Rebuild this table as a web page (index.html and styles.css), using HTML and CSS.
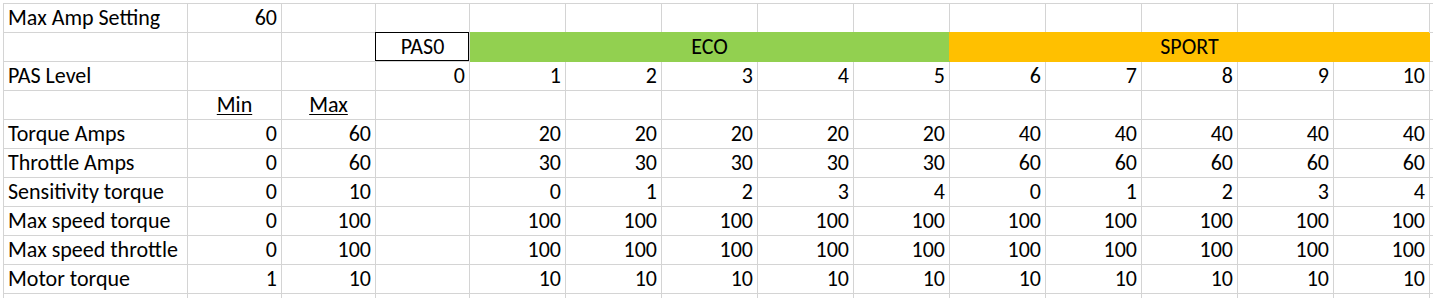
FILE: index.html
```html
<!DOCTYPE html>
<html>
<head>
<meta charset="utf-8">
<link rel="stylesheet" href="styles.css">
</head>
<body>
<div class="sheet">
  <div class="row">
    <div class="c">Max Amp Setting</div><div class="c n">60</div><div class="c"></div><div class="c"></div>
    <div class="c"></div><div class="c"></div><div class="c"></div><div class="c"></div><div class="c"></div>
    <div class="c"></div><div class="c"></div><div class="c"></div><div class="c"></div><div class="c"></div><div class="c x"></div>
  </div>
  <div class="row">
    <div class="c"></div><div class="c"></div><div class="c"></div><div class="c ctr boxed">PAS0</div>
    <div class="c ctr eco">ECO</div>
    <div class="c ctr sport">SPORT</div>
    <div class="c x"></div>
  </div>
  <div class="row">
    <div class="c">PAS Level</div><div class="c"></div><div class="c"></div><div class="c n">0</div>
    <div class="c n">1</div><div class="c n">2</div><div class="c n">3</div><div class="c n">4</div><div class="c n">5</div>
    <div class="c n">6</div><div class="c n">7</div><div class="c n">8</div><div class="c n">9</div><div class="c n">10</div><div class="c x"></div>
  </div>
  <div class="row">
    <div class="c"></div><div class="c ctr"><u>Min</u></div><div class="c ctr"><u>Max</u></div><div class="c"></div>
    <div class="c"></div><div class="c"></div><div class="c"></div><div class="c"></div><div class="c"></div>
    <div class="c"></div><div class="c"></div><div class="c"></div><div class="c"></div><div class="c"></div><div class="c x"></div>
  </div>
  <div class="row">
    <div class="c">Torque Amps</div><div class="c n">0</div><div class="c n">60</div><div class="c"></div>
    <div class="c n">20</div><div class="c n">20</div><div class="c n">20</div><div class="c n">20</div><div class="c n">20</div>
    <div class="c n">40</div><div class="c n">40</div><div class="c n">40</div><div class="c n">40</div><div class="c n">40</div><div class="c x"></div>
  </div>
  <div class="row">
    <div class="c">Throttle Amps</div><div class="c n">0</div><div class="c n">60</div><div class="c"></div>
    <div class="c n">30</div><div class="c n">30</div><div class="c n">30</div><div class="c n">30</div><div class="c n">30</div>
    <div class="c n">60</div><div class="c n">60</div><div class="c n">60</div><div class="c n">60</div><div class="c n">60</div><div class="c x"></div>
  </div>
  <div class="row">
    <div class="c">Sensitivity torque</div><div class="c n">0</div><div class="c n">10</div><div class="c"></div>
    <div class="c n">0</div><div class="c n">1</div><div class="c n">2</div><div class="c n">3</div><div class="c n">4</div>
    <div class="c n">0</div><div class="c n">1</div><div class="c n">2</div><div class="c n">3</div><div class="c n">4</div><div class="c x"></div>
  </div>
  <div class="row">
    <div class="c">Max speed torque</div><div class="c n">0</div><div class="c n">100</div><div class="c"></div>
    <div class="c n">100</div><div class="c n">100</div><div class="c n">100</div><div class="c n">100</div><div class="c n">100</div>
    <div class="c n">100</div><div class="c n">100</div><div class="c n">100</div><div class="c n">100</div><div class="c n">100</div><div class="c x"></div>
  </div>
  <div class="row">
    <div class="c">Max speed throttle</div><div class="c n">0</div><div class="c n">100</div><div class="c"></div>
    <div class="c n">100</div><div class="c n">100</div><div class="c n">100</div><div class="c n">100</div><div class="c n">100</div>
    <div class="c n">100</div><div class="c n">100</div><div class="c n">100</div><div class="c n">100</div><div class="c n">100</div><div class="c x"></div>
  </div>
  <div class="row">
    <div class="c">Motor torque</div><div class="c n">1</div><div class="c n">10</div><div class="c"></div>
    <div class="c n">10</div><div class="c n">10</div><div class="c n">10</div><div class="c n">10</div><div class="c n">10</div>
    <div class="c n">10</div><div class="c n">10</div><div class="c n">10</div><div class="c n">10</div><div class="c n">10</div><div class="c x"></div>
  </div>
  <div class="row last">
    <div class="c"></div><div class="c"></div><div class="c"></div><div class="c"></div>
    <div class="c"></div><div class="c"></div><div class="c"></div><div class="c"></div><div class="c"></div>
    <div class="c"></div><div class="c"></div><div class="c"></div><div class="c"></div><div class="c"></div><div class="c x"></div>
  </div>
</div>
</body>
</html>
```
FILE: styles.css
```css
html, body {
  margin: 0;
  padding: 0;
  background: #fff;
  overflow: hidden;
}
.sheet {
  display: grid;
  grid-template-columns: 184px 94px 94px 94px 96px 96px 96px 96px 96px 96px 96px 96px 96px 96px 3px;
  grid-template-rows: repeat(10, 29px) 4px;
  width: max-content;
  margin: 3px 0 0 3px;
  border-left: 1px solid #d4d4d4;
  border-top: 1px solid #d4d4d4;
  font-family: Carlito, Lato, "Open Sans", sans-serif;
  font-size: 22px;
  color: #000;
}
.row {
  display: contents;
}
.c {
  box-sizing: border-box;
  border-right: 1px solid #d4d4d4;
  border-bottom: 1px solid #d4d4d4;
  padding: 0 4px 0 4px;
  line-height: 28px;
  white-space: nowrap;
  overflow: visible;
}
.c.x {
  border-right: none;
  padding: 0;
}
.last .c {
  border-bottom: none;
}
.n {
  text-align: right;
}
.ctr {
  text-align: center;
}
.c u {
  text-underline-offset: 2px;
  text-decoration-thickness: 1px;
}
.boxed {
  position: relative;
}
.boxed::after {
  content: "";
  position: absolute;
  top: -1px;
  left: -1px;
  right: 0;
  bottom: 0;
  border: 1px solid #000;
  z-index: 1;
}
.eco {
  grid-column: span 5;
  background: #92d050;
  border-color: #92d050;
  box-shadow: 0 -1px 0 #92d050;
}
.sport {
  grid-column: span 5;
  background: #ffc000;
  border-color: #ffc000;
  box-shadow: -1px -1px 0 #ffc000;
}
```
